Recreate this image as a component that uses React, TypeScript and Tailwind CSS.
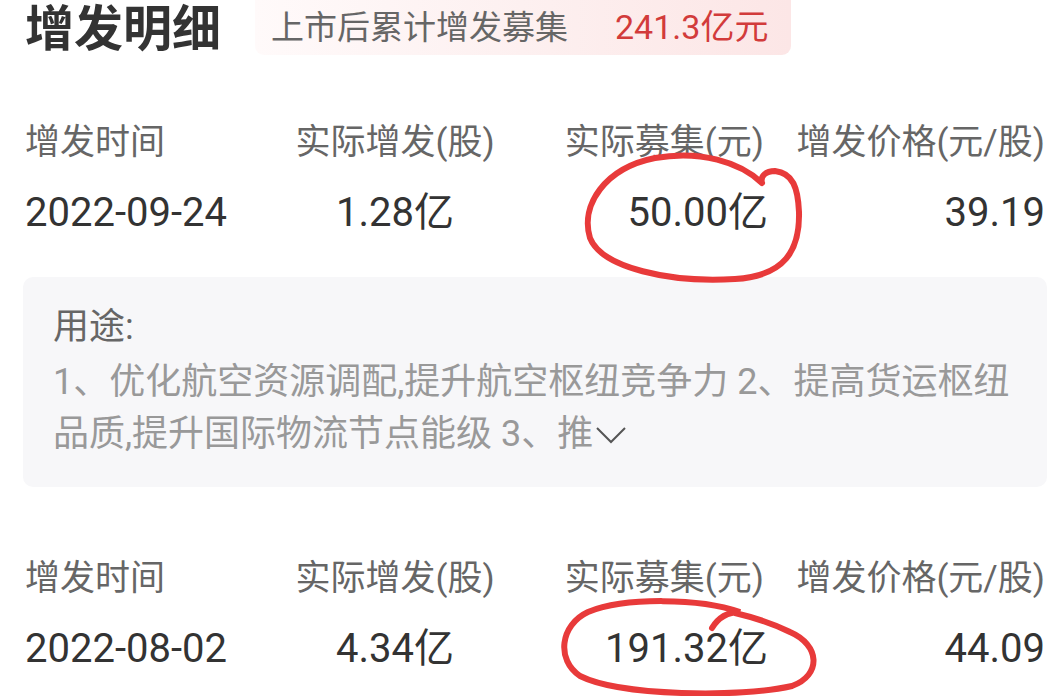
import React from "react";

type Row = { date: string; shares: string; raised: string; price: string };

const rows: Row[] = [
  { date: "2022-09-24", shares: "1.28亿", raised: "50.00亿", price: "39.19" },
  { date: "2022-08-02", shares: "4.34亿", raised: "191.32亿", price: "44.09" },
];

const FONT = "font-['Roboto','Noto_Sans_CJK_SC',sans-serif]";

function HeaderRow() {
  return (
    <div className="grid grid-cols-[265px_210px_268px_1fr] text-[35px] leading-[50px] text-[#666]">
      <div className="whitespace-nowrap">增发时间</div>
      <div className="text-center whitespace-nowrap">实际增发(股)</div>
      <div className="text-right whitespace-nowrap pr-[4px]">实际募集(元)</div>
      <div className="text-right whitespace-nowrap">增发价格(元/股)</div>
    </div>
  );
}

function ValueRow({ row }: { row: Row }) {
  return (
    <div className="grid grid-cols-[265px_210px_268px_1fr] text-[40px] leading-[50px] text-[#333] mt-[20px]">
      <div className="whitespace-nowrap">{row.date}</div>
      <div className="text-center whitespace-nowrap">{row.shares}</div>
      <div className="text-right whitespace-nowrap">{row.raised}</div>
      <div className="text-right whitespace-nowrap">{row.price}</div>
    </div>
  );
}

export default function App() {
  return (
    <div className={`relative w-[1050px] h-[696px] overflow-hidden bg-white ${FONT}`}>
      {/* Title + total */}
      <div className="flex items-start">
        <h1 className="ml-[25px] text-[49px] leading-[60px] font-bold text-[#333] whitespace-nowrap">增发明细</h1>
        <div className="ml-[34px] h-[55px] flex items-center pl-[16px] pr-[23px] rounded-b-[9px] bg-gradient-to-r from-[#fffafa] via-[#fdf0f0] to-[#fce6e6]">
          <span className="text-[33px] text-[#666] whitespace-nowrap">上市后累计增发募集</span>
          <span className="ml-[47px] text-[34px] text-[#d23b3b] whitespace-nowrap">241.3亿元</span>
        </div>
      </div>

      {/* First record */}
      <div className="pl-[25px] pr-[5px] mt-[58px]">
        <HeaderRow />
        <ValueRow row={rows[0]} />
      </div>

      {/* Usage box */}
      <div className="ml-[23px] mr-[3px] mt-[39px] rounded-[10px] bg-[#f7f7f9] pl-[30px] pt-[24px] pb-[27px]">
        <div className="text-[36px] leading-[52px] text-[#666]">用途:</div>
        <div className="mt-[3px] text-[36px] leading-[52px] text-[#999]">
          <div className="whitespace-nowrap">1、优化航空资源调配,提升航空枢纽竞争力 2、提高货运枢纽</div>
          <div className="whitespace-nowrap flex items-center">
            <span>品质,提升国际物流节点能级 3、推</span>
            <svg width="32" height="20" viewBox="0 0 32 20" className="ml-[2px] mt-[2px]">
              <polyline points="2,3 16,17 30,3" fill="none" stroke="#555" strokeWidth="2" />
            </svg>
          </div>
        </div>
      </div>

      {/* Second record */}
      <div className="pl-[25px] pr-[5px] mt-[67px]">
        <HeaderRow />
        <ValueRow row={rows[1]} />
      </div>

      {/* Hand-drawn annotations */}
      <svg className="absolute inset-0 pointer-events-none" width="1050" height="696" viewBox="0 0 1050 696">
        <path
          d="M 762 183 C 740 162, 700 150, 655 158 C 605 168, 580 205, 590 238 C 602 268, 670 283, 735 279 C 785 276, 800 250, 799 212 C 798 188, 793 173, 775 171 C 766 171, 760 176, 762 183"
          fill="none"
          stroke="#e83a3a"
          strokeWidth="6"
          strokeLinecap="round"
        />
        <path
          d="M 712 628 C 718 618, 728 612, 740 612 C 700 598, 625 597, 588 612 C 560 625, 556 660, 580 676 C 620 696, 740 698, 792 686 C 822 675, 820 645, 790 632 C 772 623, 752 617, 735 613"
          fill="none"
          stroke="#e83a3a"
          strokeWidth="6"
          strokeLinecap="round"
        />
      </svg>
    </div>
  );
}
